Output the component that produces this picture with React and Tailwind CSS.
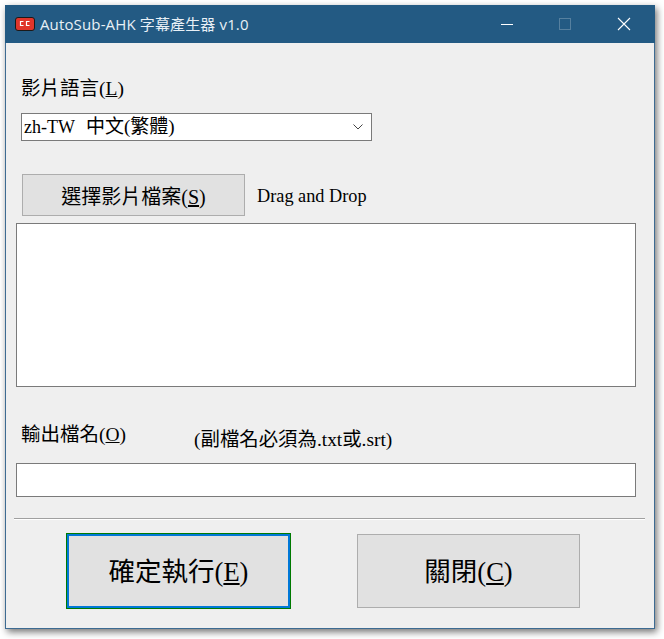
import React from 'react';

const winFont = { fontFamily: '"Liberation Serif", "Noto Sans CJK TC", serif' };

const CcIcon = () => (
    <svg width="20" height="14" viewBox="0 0 20 14" className="shrink-0">
        <rect x="0.5" y="0.5" width="19" height="13" rx="2.5" fill="#e0352b" stroke="#1a1a1a" />
        <path d="M8.5 4.5H5.5V8.5H8.5M14.5 4.5H11.5V8.5H14.5" fill="none" stroke="#fff" strokeWidth="1.2" />
    </svg>
);

const App = () => {
    return (
        <div className="w-[664px] h-[639px] bg-white pt-[5px] pl-[5px] overflow-hidden">
            <div className="w-[650px] h-[624px] flex flex-col bg-[#efefef] border border-[#3d6b92] border-t-0 shadow-[2px_3px_7px_rgba(0,0,0,0.55)]" style={winFont}>
                {/* title bar */}
                <div className="h-[38px] shrink-0 -mx-px bg-[#235a83] flex items-center pl-[10px] text-white">
                    <CcIcon />
                    <span className="ml-[5px] text-[15px] tracking-[0.14px] text-[#e8f0f6]" style={{ fontFamily: '"Open Sans", "Noto Sans CJK TC", sans-serif' }}>AutoSub-AHK 字幕產生器 v1.0</span>
                    <div className="ml-auto flex items-center mr-[24px]">
                        <div className="w-[12px] h-px bg-white" />
                        <div className="ml-[46px] w-[12px] h-[12px] border border-[#56809f]" />
                        <svg width="14" height="14" viewBox="0 0 14 14" className="ml-[46px]">
                            <path d="M1 1L13 13M13 1L1 13" stroke="#fff" strokeWidth="1.1" />
                        </svg>
                    </div>
                </div>

                <div className="flex flex-col text-black pl-[15px]">
                    <label className="mt-[34px] h-[24px] leading-[24px] text-[19.5px]">影片語言(<u>L</u>)</label>

                    <div className="mt-[12px] pl-[2px] pr-[7px] w-[351px] h-[28px] flex items-center bg-white border border-[#7a7a7a] text-[19px]">
                        <span className="text-[18px]">zh-TW</span>
                        <span className="ml-[11px]">中文(繁體)</span>
                        <svg width="12" height="8" viewBox="0 0 12 8" className="ml-auto">
                            <path d="M1.5 1.5L6 6L10.5 1.5" fill="none" stroke="#444" strokeWidth="1" />
                        </svg>
                    </div>

                    <div className="mt-[33px] flex items-center">
                        <button className="w-[223px] h-[42px] ml-[1px] pt-[3px] bg-[#e1e1e1] border border-[#adadad] text-[20px]">選擇影片檔案(<u>S</u>)</button>
                        <span className="ml-[12px] text-[18.3px] pt-[4px]">Drag and Drop</span>
                    </div>

                    <div className="mt-[7px] -ml-[5px] w-[620px] h-[164px] bg-white border border-[#7a7a7a]" />

                    <div className="mt-[36px] h-[24px] flex">
                        <label className="text-[19.5px] leading-[24px]">輸出檔名(<u>O</u>)</label>
                        <span className="ml-[68px] mt-[5px] text-[19.4px] leading-[24px] whitespace-nowrap">(副檔名必須為.txt或.srt)</span>
                    </div>

                    <div className="mt-[16px] -ml-[5px] w-[620px] h-[34px] bg-white border border-[#7a7a7a]" />

                    <div className="mt-[21px] -ml-[7px] w-[631px] h-[2px] border-t border-b border-t-[#a0a0a0] border-b-white" />

                    <div className="mt-[13px] flex items-center">
                        <button className="ml-[45px] w-[225px] h-[76px] bg-[#e1e1e1] border-[1.5px] border-[#007a00] text-[26.5px]">
                            <div className="w-full h-full pt-[3px] flex items-center justify-center border-[2px] border-[#0078d7]">確定執行(<u>E</u>)</div>
                        </button>
                        <button className="ml-[66px] w-[223px] h-[74px] pt-[3px] bg-[#e1e1e1] border border-[#adadad] text-[26.5px]">關閉(<u>C</u>)</button>
                    </div>
                </div>
            </div>
        </div>
    );
};

export default App;
